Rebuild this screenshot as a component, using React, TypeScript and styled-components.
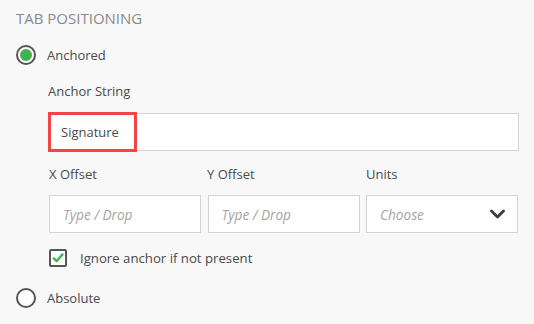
import styled, { createGlobalStyle } from "styled-components"
import type { FC } from "react"

const GlobalStyle = createGlobalStyle`
  html, body {
    margin: 0;
    padding: 0;
    background: #f8f8f8;
  }
  body {
    font-family: "Open Sans", "Liberation Sans", sans-serif;
    color: #4a4a4a;
  }
`

const Panel = styled.div`
  width: 534px;
  height: 324px;
  box-sizing: border-box;
  padding: 9px 16px 0 16px;
  background: #f8f8f8;
`

const SectionTitle = styled.div`
  font-size: 15px;
  line-height: 19px;
  color: #8a8a8a;
`

const RadioRow = styled.label<{ $top: number }>`
  display: flex;
  align-items: center;
  gap: 11px;
  margin-top: ${p => p.$top}px;
  height: 20px;
  font-size: 13px;
  color: #4a4a4a;
`

const RadioCircle = styled.span<{ $checked?: boolean }>`
  display: inline-flex;
  align-items: center;
  justify-content: center;
  width: 20px;
  height: 20px;
  box-sizing: border-box;
  border: 2px solid #555;
  border-radius: 50%;
  background: #fff;

  &::after {
    content: "";
    display: ${p => (p.$checked ? "block" : "none")};
    width: 12px;
    height: 12px;
    border-radius: 50%;
    background: #3fb34f;
  }
`

const Nested = styled.div`
  padding-left: 32px;
`

const FieldLabel = styled.div<{ $top: number }>`
  margin-top: ${p => p.$top}px;
  font-size: 13px;
  line-height: 17px;
  color: #4a4a4a;
`

const AnchorBox = styled.div`
  position: relative;
  margin-top: 13px;
  width: 471px;
  height: 38px;
  box-sizing: border-box;
  border: 1px solid #d4d4d4;
  background: #fff;
  display: flex;
  align-items: center;
  padding-left: 12px;
  font-size: 13px;
  color: #4a4a4a;
`

const Highlight = styled.span`
  position: absolute;
  left: -1px;
  top: -2px;
  width: 89px;
  height: 40px;
  box-sizing: border-box;
  border: 3px solid #f24646;
  pointer-events: none;
`

const LabelRow = styled.div`
  display: grid;
  grid-template-columns: 158px 159px 152px;
  margin-top: 15px;
  padding-left: 1px;
  font-size: 13px;
  line-height: 17px;
`

const InputRow = styled.div`
  display: grid;
  grid-template-columns: 152px 152px 152px;
  column-gap: 6.5px;
  margin-top: 12px;
  padding-left: 1px;
`

const Box = styled.div`
  height: 38px;
  box-sizing: border-box;
  border: 1px solid #d4d4d4;
  background: #fff;
  display: flex;
  align-items: center;
  justify-content: space-between;
  padding: 0 12px 0 13px;
  font-size: 13.6px;
  font-style: italic;
  color: #a3a3a3;
`

const CheckRow = styled.label`
  display: flex;
  align-items: center;
  gap: 13px;
  margin-top: 16px;
  padding-left: 1px;
  font-size: 13.2px;
  color: #4a4a4a;
`

const CheckBox = styled.span`
  display: inline-flex;
  align-items: center;
  justify-content: center;
  width: 18px;
  height: 18px;
  box-sizing: border-box;
  border: 2px solid #555;
  border-radius: 2px;
  background: #fff;
`

const Chevron: FC = () => (
  <svg width="15" height="10" viewBox="0 0 15 10">
    <path d="M1.5 2 L7.5 8 L13.5 2" fill="none" stroke="#3d3d3d" strokeWidth="2.8" strokeLinecap="round" strokeLinejoin="round" />
  </svg>
)

const Tick: FC = () => (
  <svg width="12" height="12" viewBox="0 0 12 12">
    <path d="M1.8 6.4 L4.6 9.2 L10.4 2.4" fill="none" stroke="#3fb34f" strokeWidth="2.4" strokeLinecap="round" strokeLinejoin="round" />
  </svg>
)

export default function App() {
  return (
    <>
      <GlobalStyle />
      <Panel>
        <SectionTitle>TAB POSITIONING</SectionTitle>

        <RadioRow $top={17}>
          <RadioCircle $checked />
          Anchored
        </RadioRow>

        <Nested>
          <FieldLabel $top={18}>Anchor String</FieldLabel>
          <AnchorBox>
            Signature
            <Highlight />
          </AnchorBox>

          <LabelRow>
            <span>X Offset</span>
            <span>Y Offset</span>
            <span>Units</span>
          </LabelRow>

          <InputRow>
            <Box>Type / Drop</Box>
            <Box>Type / Drop</Box>
            <Box>
              Choose
              <Chevron />
            </Box>
          </InputRow>

          <CheckRow>
            <CheckBox>
              <Tick />
            </CheckBox>
            Ignore anchor if not present
          </CheckRow>
        </Nested>

        <RadioRow $top={21}>
          <RadioCircle />
          Absolute
        </RadioRow>
      </Panel>
    </>
  )
}
